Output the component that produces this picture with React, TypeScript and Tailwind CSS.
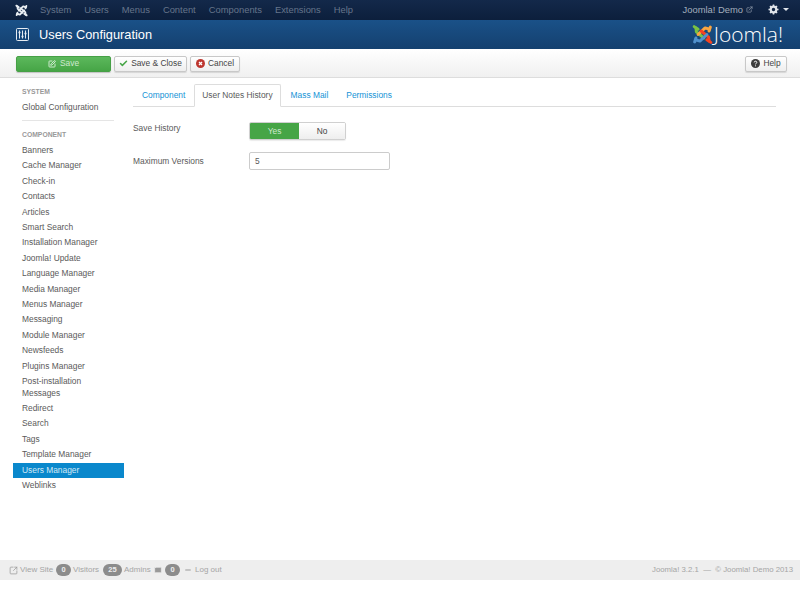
import { Check, SquarePen, ExternalLink, Mail, Minus, SquareArrowOutUpRight } from "lucide-react";

function JoomlaMark({ size, mono }: { size: number; mono?: boolean }) {
  const c = mono ? ["#e8edf2", "#e8edf2", "#e8edf2", "#e8edf2"] : ["#7ac143", "#f9a541", "#f44321", "#5091cd"];
  return (
    <svg width={size} height={size} viewBox="0 0 24 24" fill="none" strokeWidth="3.4" strokeLinecap="round" strokeLinejoin="round">
      <path d="M4.5 4.5 L5 9 L13.5 16" stroke={c[0]} />
      <path d="M2.5 3 L7 6" stroke={c[0]} />
      <path d="M20 6 L15 4.5 L7 12" stroke={c[1]} />
      <path d="M21 3.5 L19.5 8" stroke={c[1]} />
      <path d="M19.5 19.5 L19 15 L10.5 8" stroke={c[2]} />
      <path d="M21.5 21 L17 18" stroke={c[2]} />
      <path d="M4 18 L9 19.5 L17 12" stroke={c[3]} />
      <path d="M3 20.5 L4.5 16" stroke={c[3]} />
    </svg>
  );
}

const items = [
  "Banners", "Cache Manager", "Check-in", "Contacts", "Articles", "Smart Search", "Installation Manager",
  "Joomla! Update", "Language Manager", "Media Manager", "Menus Manager", "Messaging", "Module Manager",
  "Newsfeeds", "Plugins Manager", "Post-installation Messages", "Redirect", "Search", "Tags", "Template Manager",
  "Users Manager", "Weblinks",
];

function Badge({ children, w }: { children: string; w: string }) {
  return <span className={"bg-[#8c8c8c] text-[#eeeeee] font-bold rounded-full h-[12px] flex items-center justify-center text-[7.5px] " + w}>{children}</span>;
}

const btn = "h-[16px] rounded-[2px] bg-gradient-to-b from-white to-[#eeeeee] border border-[#c8c8c8] shadow-[0_1px_1px_rgba(0,0,0,0.12)] text-[#444] flex items-center justify-center gap-[3px]";

export default function App() {
  return (
    <div className="w-[800px] h-[599px] bg-white flex flex-col overflow-hidden text-[8.4px] text-[#5a5a5a] font-['Liberation_Sans',Arial,sans-serif]">
      <div className="h-5 shrink-0 bg-gradient-to-b from-[#13294a] to-[#0c1f3c] flex items-center pr-[11px]">
        <div className="w-[40px] pl-[15px] flex items-center"><JoomlaMark size={13} mono /></div>
        <nav className="flex gap-[13px] text-[9.4px] text-[#66758b]">
          {["System", "Users", "Menus", "Content", "Components", "Extensions", "Help"].map((t) => <span key={t}>{t}</span>)}
        </nav>
        <div className="ml-auto flex items-center text-[9.4px] text-[#a3aebc]">
          <span>Joomla! Demo</span>
          <ExternalLink size={7} className="ml-[3px]" />
          <svg width="11" height="11" viewBox="0 0 11 11" className="ml-[15px]">
            <circle cx="5.5" cy="5.5" r="2.8" fill="none" stroke="#dfe4ea" strokeWidth="2.2" />
            <path d="M5.5 0.5v2M5.5 8.5v2M0.5 5.5h2M8.5 5.5h2M2 2l1.4 1.4M7.6 7.6L9 9M9 2L7.6 3.4M3.4 7.6L2 9" stroke="#dfe4ea" strokeWidth="1.6" />
          </svg>
          <span className="ml-[4px] border-x-[3px] border-t-[3px] border-x-transparent border-t-[#dfe4ea]" />
        </div>
      </div>
      <div className="h-[29px] shrink-0 bg-gradient-to-b from-[#1a5188] to-[#14406f] flex items-center pl-4 pr-[17px]">
        <svg width="13" height="13" viewBox="0 0 13 13" fill="none" stroke="#e6ecf2" strokeWidth="1">
          <rect x="0.5" y="0.5" width="12" height="12" rx="1" />
          <path d="M3.5 2.5v8M6.5 2.5v8M9.5 2.5v8" />
          <path d="M2.5 4.5h2M5.5 8.5h2M8.5 5.5h2" strokeWidth="1.6" />
        </svg>
        <h1 className="ml-[10px] text-[12.8px] text-white">Users Configuration</h1>
        <div className="ml-auto flex items-center gap-[1px]">
          <JoomlaMark size={21} />
          <span className="text-[21px] text-white leading-none font-['Open_Sans',sans-serif] font-light">Joomla!</span>
        </div>
      </div>
      <div className="h-[29px] shrink-0 bg-gradient-to-b from-white to-[#f0f0f0] border-b border-[#dddddd] flex items-center pl-4 pr-[13px] gap-[3px] pt-[1px]">
        <button className="w-[95px] h-[16px] rounded-[2px] bg-gradient-to-b from-[#5cb85c] to-[#46a546] border border-[#46a046] shadow-[0_1px_1px_rgba(0,0,0,0.2)] text-[#cfe8cf] flex items-center justify-center gap-[4px]">
          <SquarePen size={8} strokeWidth={2.5} className="text-[#e8f5e8]" /><span>Save</span>
        </button>
        <button className={btn + " w-[73px]"}>
          <Check size={9} strokeWidth={4} className="text-[#46a546]" /><span>Save &amp; Close</span>
        </button>
        <button className={btn + " w-[50px]"}>
          <svg width="9" height="9" viewBox="0 0 9 9">
            <circle cx="4.5" cy="4.5" r="4.5" fill="#bd362f" />
            <path d="M3 3l3 3M6 3L3 6" stroke="#fff" strokeWidth="1.3" />
          </svg>
          <span>Cancel</span>
        </button>
        <button className={btn + " ml-auto w-[42px]"}>
          <svg width="9" height="9" viewBox="0 0 9 9">
            <circle cx="4.5" cy="4.5" r="4.5" fill="#3c3c3c" />
            <path d="M3.2 3.4c0-1.6 2.6-1.6 2.6 0 0 1-1.3 1-1.3 2M4.5 6.4v0.9" stroke="#fff" strokeWidth="1" fill="none" />
          </svg>
          <span>Help</span>
        </button>
      </div>
      <div className="flex-1 flex min-h-0">
        <aside className="w-[111px] ml-[13px] shrink-0 pt-[9px]">
          <div className="pl-[9px] text-[6.8px] font-bold text-[#999999] leading-[10px] uppercase">System</div>
          <div className="pl-[9px] mt-[3px] leading-[15px]">Global Configuration</div>
          <div className="ml-[9px] mr-[10px] mt-[5px] border-t border-[#e5e5e5]" />
          <div className="pl-[9px] mt-[9px] text-[6.8px] font-bold text-[#999999] leading-[10px] uppercase">Component</div>
          <ul className="mt-[3px]">
            {items.map((t) => (
              <li key={t} className={"pl-[9px] pr-[8px] py-[2px] leading-[11.4px] " + (t === "Users Manager" ? "bg-[#0a88cc] text-[#d4e9f5]" : "")}>{t}</li>
            ))}
          </ul>
        </aside>
        <main className="flex-1 pl-[9px] pr-6 pt-[6px]">
          <div className="flex border-b border-[#dddddd] h-[23px]">
            {["Component", "User Notes History", "Mass Mail", "Permissions"].map((t, i) => (
              <div key={t} className={"h-[23px] flex items-center rounded-t-[2px] " + (i === 1 ? "px-[7px] bg-white border border-[#dddddd] border-b-white text-[#5a5a5a]" : "text-[#1593d6] " + (i === 0 ? "pl-[9px] pr-[9px]" : i === 2 ? "pl-[10px] pr-2" : "pl-[10px]"))}>{t}</div>
            ))}
          </div>
          <div className="flex items-center mt-[15px] h-[18px]">
            <label className="w-[116px] -mt-[6px]">Save History</label>
            <div className="flex h-[18px] w-[97px] rounded-[2px] border border-[#d0d0d0] overflow-hidden shadow-[0_1px_1px_rgba(0,0,0,0.08)]">
              <span className="w-[49px] bg-[#46a546] text-[#cfe8cf] flex items-center justify-center">Yes</span>
              <span className="flex-1 bg-gradient-to-b from-white to-[#eeeeee] text-[#444] flex items-center justify-center">No</span>
            </div>
          </div>
          <div className="flex items-center mt-[12px] h-[18px]">
            <label className="w-[116px]">Maximum Versions</label>
            <div className="w-[141px] h-[18px] rounded-[2px] border border-[#cccccc] bg-white flex items-center pl-[5px]">5</div>
          </div>
        </main>
      </div>
      <footer className="h-5 shrink-0 bg-[#eeeeee] mb-[19px] flex items-center pl-[9px] pr-[7px] text-[8px] text-[#a5a5a5] whitespace-nowrap">
        <SquareArrowOutUpRight size={9} className="text-[#999]" />
        <span className="ml-[2px] w-[36px]">View Site</span>
        <Badge w="w-[15px]">0</Badge>
        <span className="ml-[2px] w-[30px]">Visitors</span>
        <Badge w="w-[19px]">25</Badge>
        <span className="ml-[2px] w-[30px]">Admins</span>
        <Mail size={8} className="text-[#999]" fill="#999" stroke="#eee" />
        <span className="ml-[3px]"><Badge w="w-[15px]">0</Badge></span>
        <Minus size={8} strokeWidth={3} className="ml-[4px] text-[#999]" />
        <span className="ml-[3px]">Log out</span>
        <span className="ml-auto text-[7.8px]">Joomla! 3.2.1 &nbsp;—&nbsp; © Joomla! Demo 2013</span>
      </footer>
    </div>
  );
}
